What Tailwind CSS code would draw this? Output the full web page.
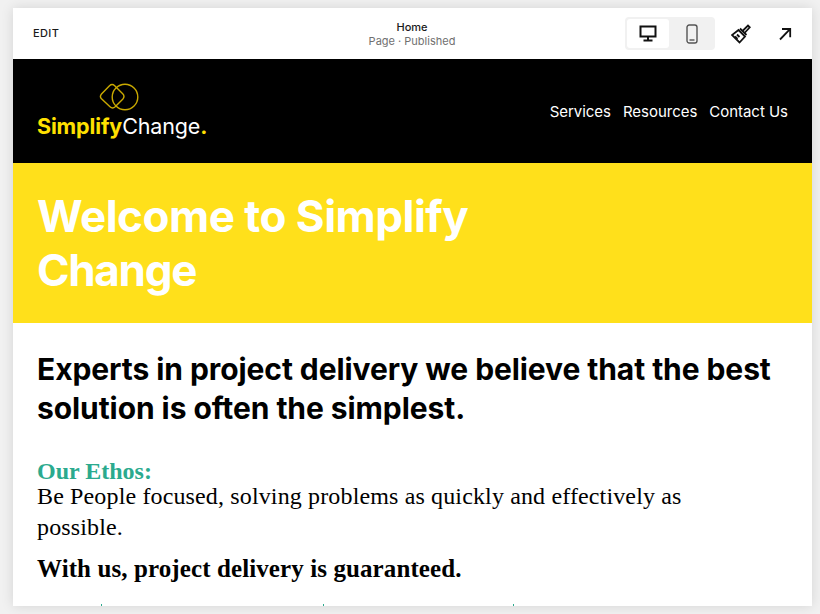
<!DOCTYPE html>
<html lang="en">
<head>
  <meta charset="UTF-8" />
  <title>Home</title>
  <script src="https://cdn.jsdelivr.net/npm/@tailwindcss/browser@4"></script>
</head>
<body class="bg-[#f1f1f1] h-[614px] w-[820px] overflow-hidden pt-2 pl-[13px] pr-2 pb-2 font-['Inter',sans-serif]">
  <div class="h-[598px] bg-white overflow-hidden flex flex-col shadow-[0_0_12px_rgba(0,0,0,0.12)]">

    <!-- Editor toolbar -->
    <div class="h-[51px] shrink-0 relative flex items-center justify-between pl-[20px] pr-[19px]">
      <span class="text-[11px] tracking-[0.4px] font-medium text-[#1a1a1a]">EDIT</span>
      <div class="absolute left-0 right-0 top-[12px] text-center leading-[14px] text-[11px] ml-[-1px]">
        <div class="font-medium text-[#1a1a1a]">Home</div>
        <div class="text-[#707070]">Page · Published</div>
      </div>
      <div class="flex items-center">
        <div class="w-[90px] h-[33px] bg-[#f1f1f1] rounded-[4px] flex p-[2px] mr-[16px]">
          <div class="w-[42px] h-[29px] bg-white rounded-[3px] flex items-center justify-center">
            <svg width="18" height="17" viewBox="0 0 18 17" fill="none" stroke="#111" stroke-width="2">
              <rect x="1.5" y="1.5" width="15" height="10" />
              <path d="M9 12v3M4.5 15.5h9" />
            </svg>
          </div>
          <div class="w-[44px] h-[29px] flex items-center justify-center">
            <svg class="ml-[1px]" width="12" height="20" viewBox="0 0 12 20" fill="none" stroke="#555" stroke-width="1.4">
              <rect x="1" y="1" width="10" height="18" rx="2.2" />
              <path d="M3.5 16h5" />
            </svg>
          </div>
        </div>
        <svg class="mr-[26px]" width="20" height="20" viewBox="0 0 20 20" fill="none" stroke="#111" stroke-width="1.8" stroke-linejoin="miter">
          <path d="M7.5 6l6.5 6.5-5.5 6-7.5-7.5z" />
          <path d="M9 4.5l6.5 6.5" />
          <path d="M11.5 7l5.5-5.5 1.8 1.8-5.3 5.7" />
          <path d="M6 10.5l2.5 2.5M4 12.5l2.5 2.5" />
        </svg>
        <svg width="16" height="16" viewBox="0 0 16 16" fill="none" stroke="#111" stroke-width="1.8">
          <path d="M3 13.5L13 3.2M5 3h8.2v8.2" />
        </svg>
      </div>
    </div>

    <!-- Site header -->
    <div class="h-[104px] shrink-0 bg-black flex items-center justify-between pl-[24px] pr-[24px]">
      <div class="flex flex-col items-start">
        <svg class="ml-[62px] mb-[2px]" width="40" height="28" viewBox="0 0 40 28" fill="none" stroke="#c9a900" stroke-width="1.4">
          <path d="M10.5 2.8c1.6-1.5 3.6-1.5 5.2 0l8 8c1.6 1.7 1.6 3.7 0 5.4l-7.5 7.5c-1.6 1.5-3.6 1.5-5.2 0l-8.5-8c-1.3-1.4-1.3-3.2 0-4.6z" />
          <circle cx="26" cy="14" r="12.8" />
        </svg>
        <div class="text-[21.5px] leading-[26px] tracking-[-0.14px] whitespace-nowrap"><span class="font-bold text-[#ffe000]">Simplify</span><span class="text-white">Change</span><span class="font-bold text-[#ffe000]">.</span></div>
      </div>
      <nav class="flex gap-[12px] text-white text-[15px] tracking-[-0.03px] mt-[3px]">
        <a>Services</a>
        <a>Resources</a>
        <a>Contact Us</a>
      </nav>
    </div>

    <!-- Banner -->
    <div class="h-[160px] shrink-0 bg-[#ffe01b] px-[24px] pt-[26px]">
      <h1 class="text-white text-[44px] leading-[54px] tracking-[-0.5px] font-bold max-w-[520px]">Welcome to Simplify <span class="tracking-[-1.3px]">Change</span></h1>
    </div>

    <!-- Body copy -->
    <div class="px-[24px] pt-[27px]">
      <h2 class="text-[30px] leading-[39px] tracking-[-0.08px] font-bold text-black">Experts in project delivery we believe that the best solution is often the simplest.</h2>
      <div class="mt-[30px] font-['Liberation_Serif',serif] text-black">
        <p class="text-[24px] leading-[26px] font-bold text-[#2baa8e]">Our Ethos:</p>
        <p class="text-[24px] leading-[31px] tracking-[0.14px] max-w-[670px] mt-[-3px]">Be People focused, solving problems as quickly and effectively as possible.</p>
        <p class="mt-[10px] text-[25px] leading-[31px] tracking-[0.1px] font-bold">With us, project delivery is guaranteed.</p>
      </div>
      <div class="relative h-[20px] mt-[20px]">
        <span class="absolute left-[64px] top-0 w-px h-[3px] bg-[#2baa8e]"></span>
        <span class="absolute left-[286px] top-0 w-px h-[3px] bg-[#2baa8e]"></span>
        <span class="absolute left-[476px] top-0 w-px h-[3px] bg-[#2baa8e]"></span>
      </div>
    </div>
  </div>
</body>
</html>
